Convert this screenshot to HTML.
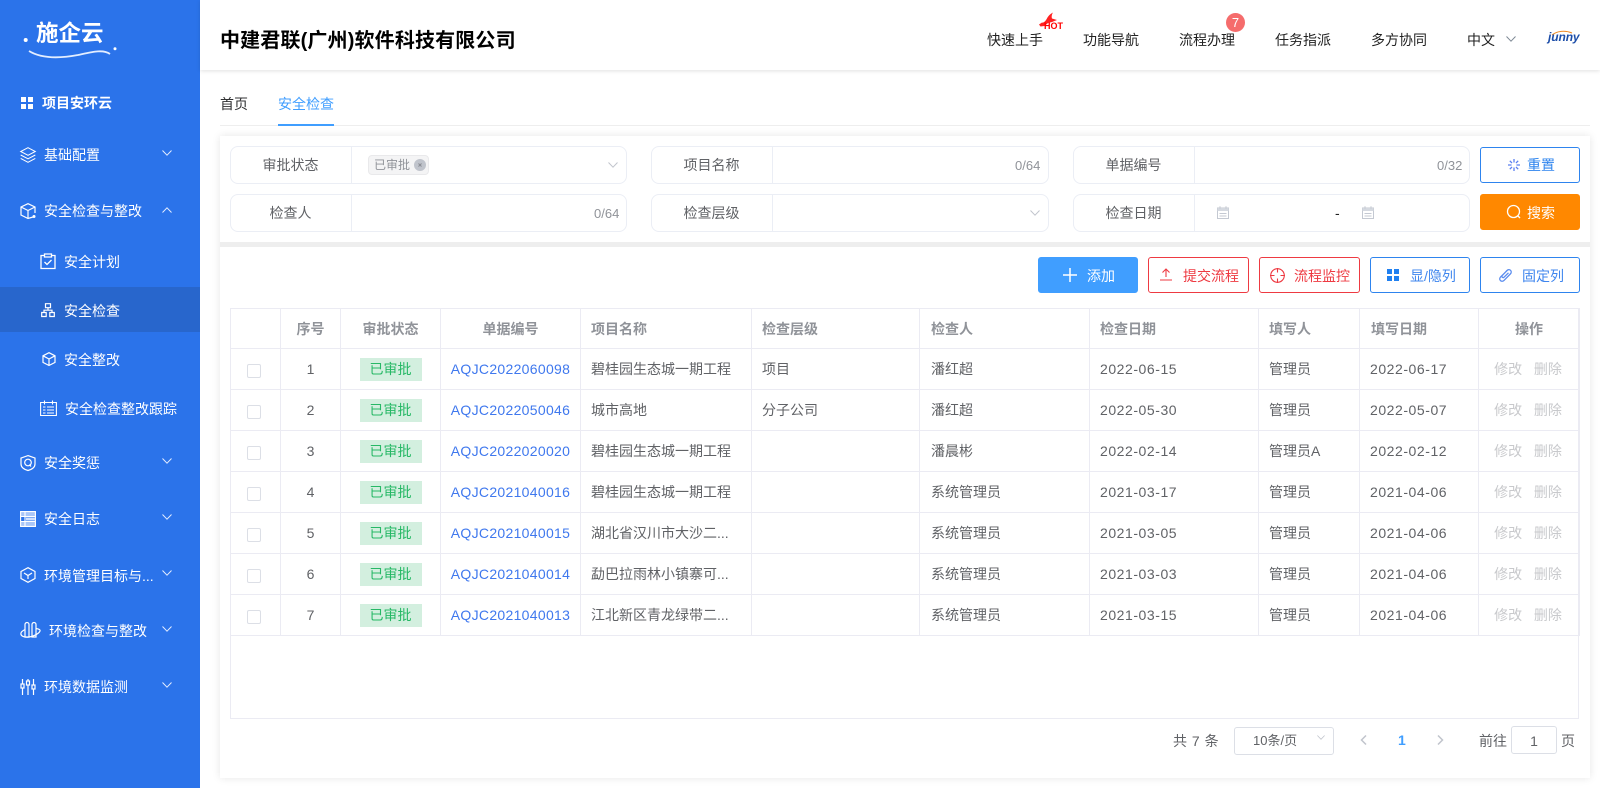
<!DOCTYPE html>
<html lang="zh"><head><meta charset="utf-8"><title>安全检查</title>
<style>
html,body{margin:0;padding:0;width:1600px;height:788px;overflow:hidden;background:#fff}
body{position:relative;font-family:"Liberation Sans","Noto Sans CJK SC",sans-serif;font-size:14px;color:#606266}
.t{position:absolute;white-space:nowrap;line-height:20px;height:20px}
.a{position:absolute}
svg{position:absolute;overflow:visible;fill:none}
#side{position:absolute;left:0;top:0;width:200px;height:788px;background:#2b73ea}
#side .t{color:#fff}
.grp{position:absolute;height:38px;border:1px solid #ebeef5;border-radius:8px;box-sizing:border-box;background:#fff}
.grp i{position:absolute;left:120px;top:0;bottom:0;width:1px;background:#ebeef5}
.lb{color:#606266;text-align:center}
.btn{position:absolute;height:36px;box-sizing:border-box;border:1px solid #2e84ee;border-radius:3px;width:100px;background:#fff}
.red{border-color:#ee3a42}
.cnt{font-size:13px;color:#909399}
table{position:absolute;left:230px;top:308px;border-collapse:collapse;table-layout:fixed;width:1349px}
td,th{border:1px solid #ebebf3;padding:0 0 0 10px;height:40px;box-sizing:border-box;text-align:left;font-weight:normal;white-space:nowrap;overflow:hidden;line-height:20px;color:#606266}
th{font-weight:bold;color:#909399}
td:nth-child(7),th:nth-child(7){padding-left:11px}
td:nth-child(8),td:nth-child(10){letter-spacing:.55px}
th:nth-child(10){padding-left:11px}
.c{text-align:center;padding:0}
.tag{display:inline-block;width:62px;height:23px;line-height:23px;background:#d3efdf;color:#27b866;text-align:center;vertical-align:middle}
.cb{display:block;width:14px;height:14px;border:1px solid #dcdfe6;border-radius:2px;box-sizing:border-box;margin:3px 0 0 16px}
td.lk{color:#3f78ee;letter-spacing:.3px}
td.op{color:#c8c9cc;padding-right:2px}
</style></head><body>
<svg width="0" height="0" style="position:absolute"><defs>
<symbol id="dn" viewBox="0 0 10 6"><path d="M.5.5 5 5.2 9.500.5" stroke="currentColor" stroke-width="1" fill="none"/></symbol>
<symbol id="cal" viewBox="0 0 12 13"><path d="M.5 2h11v10.500H.5z" stroke="#c4c9d2" stroke-width="1" fill="none"/><path d="M.5 2h11v3H.5z" fill="#d5d9e0"/><path d="M3 .3v2.500M9 .3v2.500M2.500 7.500h7M2.500 10h7" stroke="#c4c9d2" stroke-width="1" fill="none"/></symbol>
</defs></svg>

<div id="side">
<div class="t" style="left:36px;top:19px;font-size:22.500px;line-height:30px;height:30px;letter-spacing:0;font-weight:bold">施企云</div>
<svg style="left:0;top:0" width="200" height="70"><circle cx="25.700" cy="40" r="2" fill="#fff"/><circle cx="115" cy="48.700" r="1.500" fill="#fff"/><path d="M29 51C42 59 62 58 78 55 92 52 103 49 110 54" stroke="#e4eeff" stroke-width="1.800"/></svg>

<svg style="left:21px;top:97px" width="12" height="12"><path d="M0 0h5v5H0zM7 0h5v5H7zM0 7h5v5H0zM7 7h5v5H7z" fill="#fff"/></svg>
<div class="t" style="left:42px;top:93px;font-weight:bold">项目安环云</div>

<svg style="left:20px;top:147px" width="16" height="16" stroke="#fff"><path d="M8 .7 15.300 4.500 8 8.300.7 4.500zM.7 8 8 11.800 15.300 8M.7 11.400 8 15.300 15.300 11.400"/></svg>
<div class="t" style="left:44px;top:145px">基础配置</div>
<svg style="left:162px;top:150px;color:#e4edff" width="10" height="6"><use href="#dn"/></svg>

<svg style="left:20px;top:203px" width="16" height="16" stroke="#fff" stroke-width="1.200"><path d="M13 14 8 15.500 1 12V4L8 .7 15 4v6M1 4l7 3.500L15 4M8 7.500v8"/><circle cx="14" cy="13.500" r="1.500" fill="#fff" stroke="none"/></svg>
<div class="t" style="left:44px;top:201px">安全检查与整改</div>
<svg style="left:162px;top:207px;color:#e4edff;transform:scaleY(-1)" width="10" height="6"><use href="#dn"/></svg>

<svg style="left:40px;top:253px" width="16" height="16" stroke="#fff" stroke-width="1.300"><path d="M4.500 2.500H1v13h14v-13h-3.500M4.500 1h7v3h-7zM4.500 9l2.500 2.500 4.500-4.500"/></svg>
<div class="t" style="left:64px;top:252px">安全计划</div>

<div class="a" style="left:0;top:287px;width:200px;height:45px;background:#2866cc"></div>
<svg style="left:41px;top:303px" width="14" height="14" stroke="#fff" stroke-width="1.200"><path d="M4.500.7h5v4h-5zM.7 9.500h4.500v4H.7zM8.800 9.500h4.500v4H8.800zM7 4.700v2.500M3 9.500V7.200h8v2.300"/></svg>
<div class="t" style="left:64px;top:301px">安全检查</div>

<svg style="left:42px;top:352px" width="14" height="14" stroke="#fff" stroke-width="1.200"><path d="M7 .7 13 3.800v6.600L7 13.500 1 10.400V3.800zM1 3.800 7 7l6-3.200M7 7v6.500"/></svg>
<div class="t" style="left:64px;top:350px">安全整改</div>

<svg style="left:40px;top:400px" width="17" height="16" stroke="#fff" stroke-width="1.100"><path d="M.6 2.500h15.800v13H.6zM4.500.5v4M12.500.5v4M3 7h2.500M7 7h7M3 10h2.500M7 10h7M3 13h2.500M7 13h7"/></svg>
<div class="t" style="left:65px;top:399px">安全检查整改跟踪</div>

<svg style="left:20px;top:455px" width="16" height="16" stroke="#fff" stroke-width="1.200"><path d="M8 .6 15 3v6c0 3.500-3.500 5.500-7 6.500C4.500 14.500 1 12.500 1 9V3z"/><circle cx="8" cy="7.500" r="3.300"/><path d="M9.500 9.500 11 11.500"/></svg>
<div class="t" style="left:44px;top:453px">安全奖惩</div>
<svg style="left:162px;top:458px;color:#e4edff" width="10" height="6"><use href="#dn"/></svg>

<svg style="left:20px;top:511px" width="16" height="16" stroke="#fff" stroke-width="1.100"><path d="M1 1h15v5H1z M1 11h15v5H1z" fill="#a9c6f8" stroke="none"/><path d="M.6.6h14.800v14.800H.6zM5 .6v14.800M.6 5.500h14.800M.6 10.500h14.800"/><path d="M6 6.500h9v3H6z" fill="#cfe0ff" stroke="none"/></svg>
<div class="t" style="left:44px;top:509px">安全日志</div>
<svg style="left:162px;top:514px;color:#e4edff" width="10" height="6"><use href="#dn"/></svg>

<svg style="left:20px;top:567px" width="16" height="16" stroke="#fff" stroke-width="1.200"><path d="M8 .7 15 4.500v7L8 15.300 1 11.500v-7zM4 6l4 2.500L12 6M8 8.500V12"/></svg>
<div class="t" style="left:44px;top:566px">环境管理目标与...</div>
<svg style="left:162px;top:570px;color:#e4edff" width="10" height="6"><use href="#dn"/></svg>

<svg style="left:20px;top:622px" width="21" height="18" stroke="#fff" stroke-width="1.200"><path d="M5 2.500A2 2 0 0 1 9 2.500V15H5zM12 2.500a2 2 0 0 1 4 0V15h-4z"/><path d="M5 7.500C2 9 .5 11 1 12.500 1.700 14.500 5 15.500 9 15c5-.7 10-3.500 11-6 .4-1.200-.7-2-4-2.500"/></svg>
<div class="t" style="left:49px;top:621px">环境检查与整改</div>
<svg style="left:162px;top:626px;color:#e4edff" width="10" height="6"><use href="#dn"/></svg>

<svg style="left:20px;top:679px" width="16" height="16" stroke="#fff" stroke-width="1.200"><path d="M2.500 0v5M2.500 9v7M8 0v2M8 6v10M13.500 0v6M13.500 10v6"/><rect x="1" y="5" width="3" height="4"/><rect x="6.500" y="2" width="3" height="4"/><rect x="12" y="6" width="3" height="4"/></svg>
<div class="t" style="left:44px;top:677px">环境数据监测</div>
<svg style="left:162px;top:682px;color:#e4edff" width="10" height="6"><use href="#dn"/></svg>
</div>

<!-- header -->
<div class="a" style="left:200px;top:0;width:1400px;height:70px;background:#fff;box-shadow:0 1px 4px rgba(0,0,0,.12)"></div>
<div class="t" style="left:220px;top:26px;font-size:20px;line-height:30px;height:30px;font-weight:bold;color:#000;letter-spacing:.15px">中建君联(广州)软件科技有限公司</div>
<div class="t" style="left:987px;top:30px;color:#222">快速上手</div>
<div class="t" style="left:1083px;top:30px;color:#222">功能导航</div>
<div class="t" style="left:1179px;top:30px;color:#222">流程办理</div>
<div class="t" style="left:1275px;top:30px;color:#222">任务指派</div>
<div class="t" style="left:1371px;top:30px;color:#222">多方协同</div>
<div class="t" style="left:1467px;top:30px;color:#222">中文</div>
<svg style="left:1506px;top:36px;color:#7d8894" width="10" height="6"><use href="#dn"/></svg>
<svg style="left:1039px;top:12px" width="23" height="18"><path d="M0 12.500 3 10.500C4.500 11 6 9.500 7 8 8.500 6 9 3 14 .5 12.500 3 12.500 5 13 6.500L18 8 13 10 9 11 5.500 14 1.500 14.500z" fill="#f22"/></svg>
<div class="t" style="left:1044px;top:22px;font-size:9px;line-height:9px;height:9px;font-weight:bold;color:#f00;font-family:'Liberation Sans',sans-serif">HOT</div>
<div class="a" style="left:1226px;top:13px;width:19px;height:19px;border-radius:50%;background:#f56c6c;color:#fff;text-align:center;font-size:13px;line-height:19px">7</div>
<svg style="left:1549px;top:30px" width="32" height="10"><path d="M3 5C8 1 16 0 23 3" stroke="#f08a24" stroke-width="1.100"/></svg>
<div class="t" style="left:1548px;top:27px;font-size:12px;font-weight:bold;font-style:italic;color:#1c4da8;letter-spacing:-.1px">junny</div>

<!-- tabs -->
<div class="t" style="left:220px;top:94px;color:#303133">首页</div>
<div class="t" style="left:278px;top:94px;color:#409eff">安全检查</div>
<div class="a" style="left:220px;top:125px;width:1370px;height:1px;background:#eee"></div>
<div class="a" style="left:278px;top:124px;width:56px;height:2px;background:#409eff"></div>

<!-- filter -->
<div class="a" style="left:220px;top:136px;width:1370px;height:642px;background:#fff;box-shadow:0 0 8px rgba(0,0,0,.1)"></div>
<div class="a" style="left:220px;top:242px;width:1370px;height:5px;background:#eee"></div>

<div class="grp" style="left:230px;top:146px;width:397px"><i></i></div>
<div class="t lb" style="left:230px;width:121px;top:155px">审批状态</div>
<div class="a" style="left:368px;top:155px;width:61px;height:20px;box-sizing:border-box;background:#f4f4f5;border:1px solid #e9e9eb;border-radius:4px"></div>
<div class="t" style="left:374px;top:155px;font-size:12px;color:#909399">已审批</div>
<div class="a" style="left:413.500px;top:159px;width:12px;height:12px;border-radius:50%;background:#c0c4cc"></div>
<svg style="left:417.500px;top:163px" width="4" height="4" stroke="#8a8d94"><path d="M.5.5l3 3M3.500.5l-3 3"/></svg>
<svg style="left:608px;top:162px;color:#c0c4cc" width="10" height="6"><use href="#dn"/></svg>

<div class="grp" style="left:651px;top:146px;width:398px"><i></i></div>
<div class="t lb" style="left:651px;width:121px;top:155px">项目名称</div>
<div class="t cnt" style="left:1015px;top:156px">0/64</div>

<div class="grp" style="left:1073px;top:146px;width:397px"><i></i></div>
<div class="t lb" style="left:1073px;width:121px;top:155px">单据编号</div>
<div class="t cnt" style="left:1437px;top:156px">0/32</div>

<div class="btn" style="left:1480px;top:147px"></div>
<svg style="left:1508px;top:159px" width="12" height="12" stroke="#5b7ff0" stroke-width="1.300"><path d="M6 0v3.500M6 8.500V12M0 6h3.500M8.500 6H12M1.800 1.800l2.200 2.200M8 8l2.200 2.200M10.200 1.800 8 4M4 8l-2.200 2.200"/></svg>
<div class="t" style="left:1527px;top:155px;color:#2e84ee">重置</div>

<div class="grp" style="left:230px;top:194px;width:397px"><i></i></div>
<div class="t lb" style="left:230px;width:121px;top:203px">检查人</div>
<div class="t cnt" style="left:594px;top:204px">0/64</div>

<div class="grp" style="left:651px;top:194px;width:398px"><i></i></div>
<div class="t lb" style="left:651px;width:121px;top:203px">检查层级</div>
<svg style="left:1030px;top:210px;color:#c0c4cc" width="10" height="6"><use href="#dn"/></svg>

<div class="grp" style="left:1073px;top:194px;width:397px"><i></i></div>
<div class="t lb" style="left:1073px;width:121px;top:203px">检查日期</div>
<svg style="left:1217px;top:206px" width="12" height="13"><use href="#cal"/></svg>
<div class="t" style="left:1335px;top:203px;color:#222">-</div>
<svg style="left:1362px;top:206px" width="12" height="13"><use href="#cal"/></svg>

<div class="btn" style="left:1480px;top:194px;background:#ff8800;border-color:#ff8800"></div>
<svg style="left:1506px;top:204px" width="16" height="16" stroke="#fff" stroke-width="1.300"><circle cx="7.500" cy="7.500" r="6"/><path d="M12 12l2 2"/></svg>
<div class="t" style="left:1527px;top:203px;color:#fff">搜索</div>

<!-- toolbar -->
<div class="btn" style="left:1038px;top:257px;background:#409eff;border-color:#409eff"></div>
<svg style="left:1063px;top:268px" width="14" height="14" stroke="#fff" stroke-width="1.500"><path d="M7 0v14M0 7h14"/></svg>
<div class="t" style="left:1087px;top:266px;color:#fff">添加</div>

<div class="btn red" style="left:1148px;top:257px;width:101px"></div>
<svg style="left:1160px;top:268px" width="12" height="13" stroke="#ee3a42" stroke-width="1.100"><path d="M6 9V1M2.500 4.500 6 1l3.500 3.500M0 12h12"/></svg>
<div class="t" style="left:1183px;top:266px;color:#ee3a42">提交流程</div>

<div class="btn red" style="left:1259px;top:257px;width:101px"></div>
<svg style="left:1270px;top:268px" width="15" height="15" stroke="#ee3a42" stroke-width="1.100"><circle cx="7.500" cy="7.500" r="6.800"/><path d="M7.500 0v4.500M7.500 10.500V15M0 7.500h4.500M10.500 7.500H15"/></svg>
<div class="t" style="left:1294px;top:266px;color:#ee3a42">流程监控</div>

<div class="btn" style="left:1370px;top:257px"></div>
<svg style="left:1387px;top:269px" width="12" height="12"><path d="M0 0h5v5H0zM7 0h5v5H7zM0 7h5v5H0zM7 7h5v5H7z" fill="#2080f0"/></svg>
<div class="t" style="left:1410px;top:266px;color:#3f86ee">显/隐列</div>

<div class="btn" style="left:1480px;top:257px"></div>
<svg style="left:1499px;top:269px" width="13" height="13" stroke="#5b8def" stroke-width="1.300"><path d="M8.500 1.200 1.700 7.800C.3 9.200.5 10.800 1.500 11.600 2.500 12.500 4 12.400 5 11.400L11.300 5C12.500 3.800 12.500 2.300 11.500 1.300 10.500.3 9 .5 8 1.500L3.300 6.400C2.700 7 2.800 7.900 3.300 8.300 3.900 8.800 4.600 8.700 5.200 8.100L9.500 3.800"/></svg>
<div class="t" style="left:1522px;top:266px;color:#3f86ee">固定列</div>

<!-- table -->
<div class="a" style="left:230px;top:308px;width:1349px;height:411px;box-sizing:border-box;border:1px solid #ebebf3"></div>
<table>
<colgroup><col style="width:50px"><col style="width:60px"><col style="width:100px"><col style="width:140px"><col style="width:171px"><col style="width:168px"><col style="width:170px"><col style="width:169px"><col style="width:101px"><col style="width:119px"><col style="width:101px"></colgroup>
<tr><th></th><th class="c">序号</th><th class="c">审批状态</th><th class="c">单据编号</th><th>项目名称</th><th>检查层级</th><th>检查人</th><th>检查日期</th><th>填写人</th><th>填写日期</th><th class="c">操作</th></tr>
<tr style="height:41px"><td style="padding:0"><span class="cb"></span></td><td class="c">1</td><td class="c"><span class="tag">已审批</span></td><td class="c lk">AQJC2022060098</td><td>碧桂园生态城一期工程</td><td>项目</td><td>潘红超</td><td>2022-06-15</td><td>管理员</td><td>2022-06-17</td><td class="c op">修改&nbsp;&nbsp; 删除</td></tr>
<tr style="height:41px"><td style="padding:0"><span class="cb"></span></td><td class="c">2</td><td class="c"><span class="tag">已审批</span></td><td class="c lk">AQJC2022050046</td><td>城市高地</td><td>分子公司</td><td>潘红超</td><td>2022-05-30</td><td>管理员</td><td>2022-05-07</td><td class="c op">修改&nbsp;&nbsp; 删除</td></tr>
<tr style="height:41px"><td style="padding:0"><span class="cb"></span></td><td class="c">3</td><td class="c"><span class="tag">已审批</span></td><td class="c lk">AQJC2022020020</td><td>碧桂园生态城一期工程</td><td></td><td>潘晨彬</td><td>2022-02-14</td><td>管理员A</td><td>2022-02-12</td><td class="c op">修改&nbsp;&nbsp; 删除</td></tr>
<tr style="height:41px"><td style="padding:0"><span class="cb"></span></td><td class="c">4</td><td class="c"><span class="tag">已审批</span></td><td class="c lk">AQJC2021040016</td><td>碧桂园生态城一期工程</td><td></td><td>系统管理员</td><td>2021-03-17</td><td>管理员</td><td>2021-04-06</td><td class="c op">修改&nbsp;&nbsp; 删除</td></tr>
<tr style="height:41px"><td style="padding:0"><span class="cb"></span></td><td class="c">5</td><td class="c"><span class="tag">已审批</span></td><td class="c lk">AQJC2021040015</td><td>湖北省汉川市大沙二...</td><td></td><td>系统管理员</td><td>2021-03-05</td><td>管理员</td><td>2021-04-06</td><td class="c op">修改&nbsp;&nbsp; 删除</td></tr>
<tr style="height:41px"><td style="padding:0"><span class="cb"></span></td><td class="c">6</td><td class="c"><span class="tag">已审批</span></td><td class="c lk">AQJC2021040014</td><td>勐巴拉雨林小镇寨可...</td><td></td><td>系统管理员</td><td>2021-03-03</td><td>管理员</td><td>2021-04-06</td><td class="c op">修改&nbsp;&nbsp; 删除</td></tr>
<tr style="height:41px"><td style="padding:0"><span class="cb"></span></td><td class="c">7</td><td class="c"><span class="tag">已审批</span></td><td class="c lk">AQJC2021040013</td><td>江北新区青龙绿带二...</td><td></td><td>系统管理员</td><td>2021-03-15</td><td>管理员</td><td>2021-04-06</td><td class="c op">修改&nbsp;&nbsp; 删除</td></tr>
</table>

<!-- pagination -->
<div class="t" style="left:1173px;top:731px;word-spacing:1px">共 7 条</div>
<div class="a" style="left:1234px;top:727px;width:100px;height:28px;box-sizing:border-box;border:1px solid #dcdfe6;border-radius:3px"></div>
<div class="t" style="left:1253px;top:731px;font-size:13px">10条/页</div>
<svg style="left:1317px;top:735px;color:#c0c4cc" width="8" height="5"><use href="#dn"/></svg>
<svg style="left:1360px;top:735px" width="7" height="10" stroke="#c0c4cc" stroke-width="1.500"><path d="M6 .5 1.500 5 6 9.500"/></svg>
<div class="t" style="left:1398px;top:730px;font-weight:bold;color:#409eff">1</div>
<svg style="left:1437px;top:735px" width="7" height="10" stroke="#c0c4cc" stroke-width="1.500"><path d="M1 .5 5.500 5 1 9.500"/></svg>
<div class="t" style="left:1479px;top:731px">前往</div>
<div class="a" style="left:1511px;top:726px;width:46px;height:28px;box-sizing:border-box;border:1px solid #dcdfe6;border-radius:3px;text-align:center;line-height:28px">1</div>
<div class="t" style="left:1561px;top:731px">页</div>
</body></html>
